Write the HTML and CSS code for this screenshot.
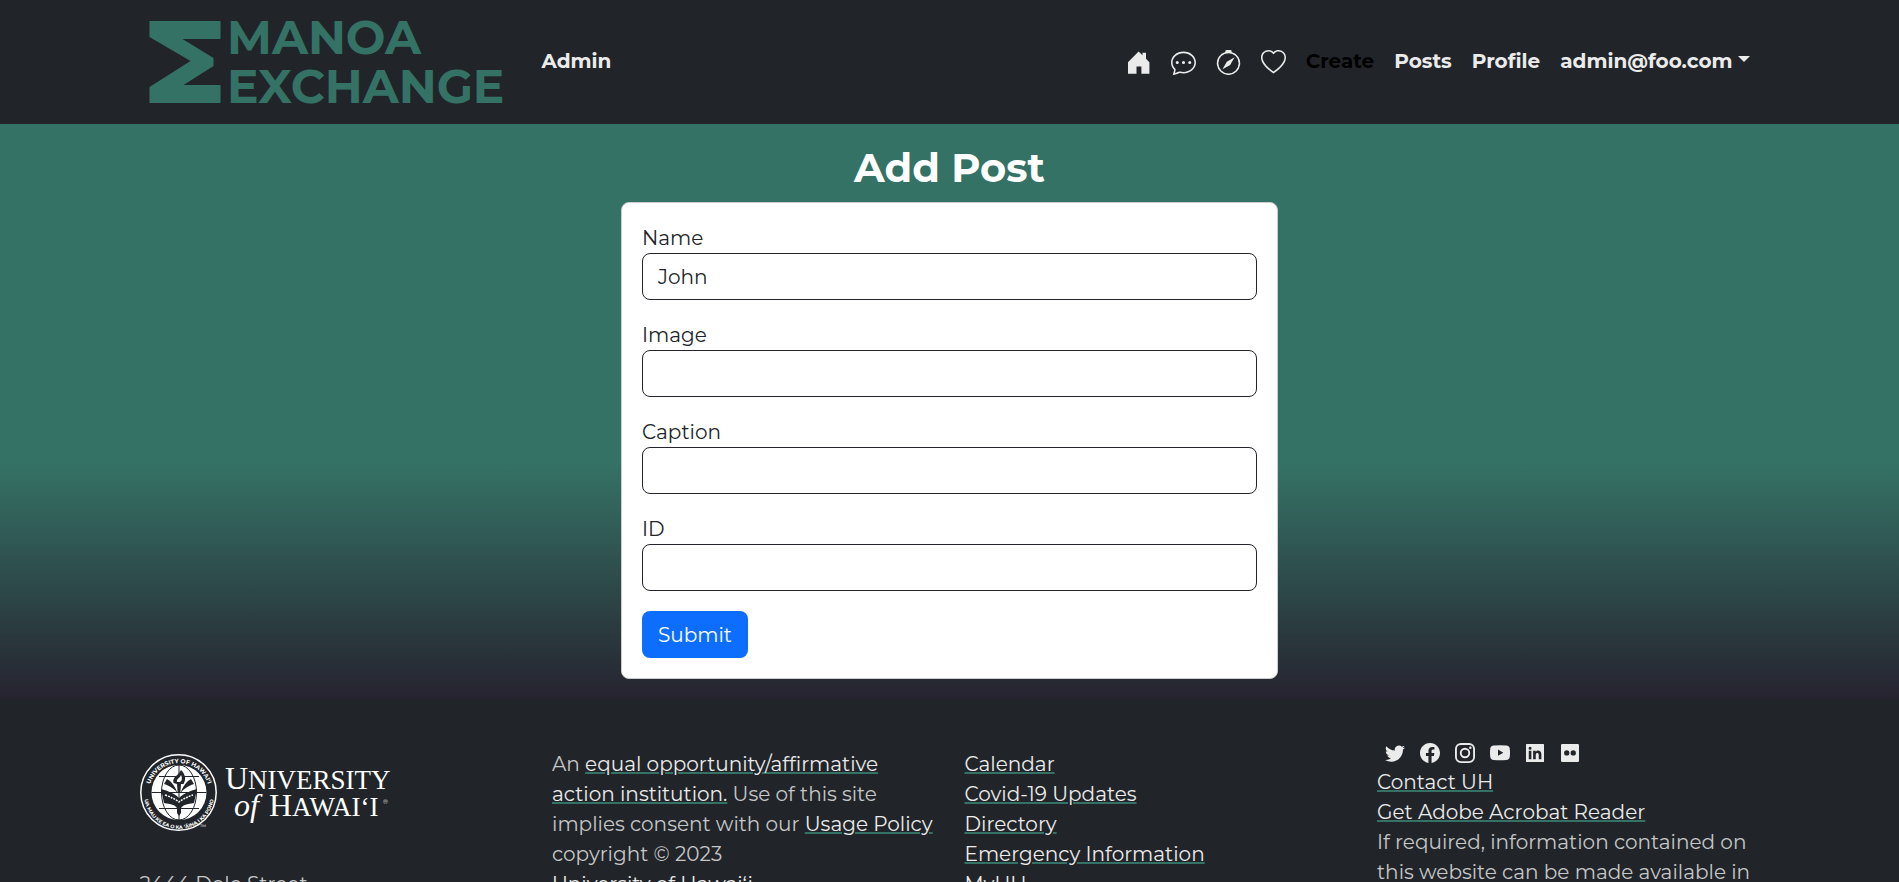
FILE: index.html
```
<!DOCTYPE html>
<html lang="en">
<head>
<meta charset="utf-8">
<title>Manoa Exchange</title>
<link rel="stylesheet" href="styles.css">
</head>
<body>
<header class="navbar">
  <nav class="container navbar-inner">
    <a class="brand" href="#" aria-label="Manoa Exchange">
      <svg class="brand-logo" width="372" height="84" viewBox="0 0 372 84" fill="currentColor">
        <path d="M9.500 1H80.500V19H42.500L73.500 38V46L43.500 65H80.500V83H9.500V67L50.500 41L9.500 17Z"/>
        <text class="brand-text" x="87" y="34">MANOA</text>
        <text class="brand-text" x="87" y="83">EXCHANGE</text>
      </svg>
    </a>
    <a class="nav-link" href="#">Admin</a>
    <div class="nav-end">
      <a class="nav-link icon-link" href="#" aria-label="Home"><svg class="nav-icon" viewBox="0 0 25 25"><path d="M2 12.200L12.600 1.500L16.500 5.300V2.800H20V8.800L23.400 12.200V23.700H15.400V16.400H10.500V23.700H2Z"/></svg></a>
      <a class="nav-link icon-link" href="#" aria-label="Messages"><svg class="nav-icon" viewBox="0 0 16 16"><path d="M5 8a1 1 0 1 1-2 0 1 1 0 0 1 2 0zm4 0a1 1 0 1 1-2 0 1 1 0 0 1 2 0zm3 1a1 1 0 1 0 0-2 1 1 0 0 0 0 2z"/><path d="m2.165 15.803.02-.004c1.830-.363 2.948-.842 3.468-1.105A9.060 9.060 0 0 0 8 15c4.418 0 8-3.134 8-7s-3.582-7-8-7-8 3.134-8 7c0 1.760.743 3.370 1.970 4.600a10.437 10.437 0 0 1-.524 2.318l-.003.011a10.722 10.722 0 0 1-.244.637c-.079.186.074.394.273.362a21.673 21.673 0 0 0 .693-.125zm.8-3.108a1 1 0 0 0-.287-.801C1.618 10.830 1 9.468 1 8c0-3.192 3.004-6 7-6s7 2.808 7 6c0 3.193-3.004 6-7 6a8.060 8.060 0 0 1-2.088-.272 1 1 0 0 0-.711.074c-.387.196-1.240.570-2.634.893a10.970 10.970 0 0 0 .398-2z"/></svg></a>
      <a class="nav-link icon-link" href="#" aria-label="Explore"><svg class="nav-icon" viewBox="0 0 16 16"><path d="M8 16.016a7.500 7.500 0 0 0 1.962-14.740A1 1 0 0 0 9 0H7a1 1 0 0 0-.962 1.276A7.500 7.500 0 0 0 8 16.016zm6.500-7.500a6.500 6.500 0 1 1-13 0 6.500 6.500 0 0 1 13 0z"/><path d="m6.940 7.440 4.950-2.830-2.830 4.950-4.949 2.830 2.828-4.950z"/></svg></a>
      <a class="nav-link icon-link" href="#" aria-label="Favorites"><svg class="nav-icon" viewBox="0 0 16 16"><path d="m8 2.748-.717-.737C5.600.281 2.514.878 1.400 3.053c-.523 1.023-.641 2.500.314 4.385.920 1.815 2.834 3.989 6.286 6.357 3.452-2.368 5.365-4.542 6.286-6.357.955-1.886.838-3.362.314-4.385C13.486.878 10.400.280 8.717 2.010L8 2.748zM8 15C-7.333 4.868 3.279-3.040 7.824 1.143c.060.055.119.112.176.171a3.120 3.120 0 0 1 .176-.170C12.720-3.042 23.333 4.867 8 15z"/></svg></a>
      <a class="nav-link active" href="#">Create</a>
      <a class="nav-link" href="#">Posts</a>
      <a class="nav-link" href="#">Profile</a>
      <button class="nav-link dropdown" type="button">admin@foo.com</button>
    </div>
  </nav>
</header>

<main class="page">
  <div class="form-column">
    <h2 class="title">Add Post</h2>
    <form class="card">
      <div class="field"><label for="name">Name</label><input id="name" type="text" value="John"></div>
      <div class="field"><label for="image">Image</label><input id="image" type="text"></div>
      <div class="field"><label for="caption">Caption</label><input id="caption" type="text"></div>
      <div class="field"><label for="post-id">ID</label><input id="post-id" type="text"></div>
      <button class="submit" type="button">Submit</button>
    </form>
  </div>
</main>

<footer class="footer">
  <div class="container footer-grid">
    <div class="footer-col">
      <svg class="uh-logo" width="260" height="80" viewBox="0 0 260 80" role="img" aria-label="University of Hawaiʻi">
        <defs>
          <path id="arc-top" d="M8.900 42.700A30.200 30.200 0 1 1 69.100 42.700"/>
          <path id="arc-bottom" d="M4 41A35 35 0 0 0 74 41"/>
        </defs>
        <circle cx="38.500" cy="39.500" r="37.700" fill="#212529" stroke="#fff" stroke-width="1.500"/>
        <circle cx="39" cy="39.500" r="27.500" fill="#fff"/>
        <g fill="none" stroke="#212529" stroke-width="1">
          <path d="M11.500 39.500H66.500M19 23.500H59M19 55.500H59M39 12V67"/>
          <ellipse cx="39" cy="39.500" rx="17.500" ry="27.500"/>
        </g>
        <path d="M21 36C28 38 34 40 39 45C44 40 50 38 57 36L54 50C47 51 43 52 41 55V60L39 63L37 60V55C35 52 31 51 24 50Z" fill="#212529"/>
        <path d="M24 31C30 33 35 36 38 41C35 33 31 28 27 26M54 31C48 33 43 36 40 41C43 33 47 28 51 26" fill="#212529"/>
        <path d="M25 42C31 44 35 46 39 49C43 46 47 44 53 42" fill="none" stroke="#fff" stroke-width="1.500" stroke-dasharray="2 1"/>
        <path d="M33.500 30C32 24 38 23 41 17C46 22 46 27 43.500 31H41L40.300 40H37.700L37 31Z" fill="#212529"/>
        <path d="M37 29C36 26 40 25 41 22C42.500 25 42 28 40 29Z" fill="#fff"/>
        <text class="seal-top"><textPath href="#arc-top" startOffset="50%">UNIVERSITY OF HAWAIʻI</textPath></text>
        <text class="seal-bottom"><textPath href="#arc-bottom" startOffset="50%">UA MAU KE EA O KA ʻĀINA I KA PONO</textPath></text>
        <g class="wordmark">
          <text x="85" y="36"><tspan class="cap">U</tspan>NIVERSITY</text>
          <text class="cap of" x="94" y="63">of</text>
          <text x="129" y="63"><tspan class="cap">H</tspan>AWAIʻI</text>
        </g>
        <text class="mark" x="243" y="51">®</text>
        <text class="mark" x="60" y="76">™</text>
      </svg>
      <div class="address">2444 Dole Street<br>Honolulu, HI 96822</div>
    </div>
    <div class="footer-col">
      An <a href="#">equal opportunity/affirmative action institution.</a> Use of this site implies consent with our <a href="#">Usage Policy</a><br>copyright © 2023<br><a href="#">University of Hawaiʻi</a>
    </div>
    <div class="footer-col">
      <a href="#">Calendar</a><br>
      <a href="#">Covid-19 Updates</a><br>
      <a href="#">Directory</a><br>
      <a href="#">Emergency Information</a><br>
      <a href="#">MyUH</a>
    </div>
    <div class="footer-col social-col">
      <div class="social">
        <a href="#" aria-label="Twitter"><svg viewBox="0 0 16 16"><path d="M5.026 15c6.038 0 9.341-5.003 9.341-9.334 0-.140 0-.282-.006-.422A6.685 6.685 0 0 0 16 3.542a6.658 6.658 0 0 1-1.889.518 3.301 3.301 0 0 0 1.447-1.817 6.533 6.533 0 0 1-2.087.793A3.286 3.286 0 0 0 7.875 6.030a9.325 9.325 0 0 1-6.767-3.429 3.289 3.289 0 0 0 1.018 4.382A3.323 3.323 0 0 1 .640 6.575v.045a3.288 3.288 0 0 0 2.632 3.218 3.203 3.203 0 0 1-.865.115 3.230 3.230 0 0 1-.614-.057 3.283 3.283 0 0 0 3.067 2.277A6.588 6.588 0 0 1 .780 13.580a6.320 6.320 0 0 1-.780-.045A9.344 9.344 0 0 0 5.026 15z"/></svg></a>
        <a href="#" aria-label="Facebook"><svg viewBox="0 0 16 16"><path d="M16 8.049c0-4.446-3.582-8.050-8-8.050C3.580 0-.002 3.603-.002 8.050c0 4.017 2.926 7.347 6.750 7.951v-5.625h-2.030V8.050H6.750V6.275c0-2.017 1.195-3.131 3.022-3.131.876 0 1.791.157 1.791.157v1.980h-1.009c-.993 0-1.303.621-1.303 1.258v1.510h2.218l-.354 2.326H9.250V16c3.824-.604 6.750-3.934 6.750-7.951z"/></svg></a>
        <a href="#" aria-label="Instagram"><svg viewBox="0 0 16 16"><rect x=".75" y=".75" width="14.500" height="14.500" rx="4" fill="none" stroke="currentColor" stroke-width="1.500"/><circle cx="8" cy="8" r="3.400" fill="none" stroke="currentColor" stroke-width="1.500"/><circle cx="12.270" cy="3.700" r="1"/></svg></a>
        <a href="#" aria-label="YouTube"><svg viewBox="0 0 16 16"><path fill-rule="evenodd" d="M3 2Q8 1.600 13 2Q15.600 2.200 15.800 4.500Q16.200 8 15.800 11Q15.600 13.400 13 13.600Q8 14 3 13.600Q.400 13.400.200 11Q-.200 8 .200 4.500Q.400 2.200 3 2ZM6.400 5.200V10.200L10.600 7.700Z"/></svg></a>
        <a href="#" aria-label="LinkedIn"><svg viewBox="0 0 16 16"><path fill-rule="evenodd" d="M1.300.800H14.700Q15.200.800 15.200 1.300V14.700Q15.200 15.200 14.700 15.200H1.300Q.800 15.200.800 14.700V1.300Q.800.800 1.300.800ZM3 6.200V13H5.100V6.200ZM6.500 6.200V13H8.600V9.600C8.600 7.500 11 7.500 11 9.600V13H13.100V9C13.100 5.700 9.800 5.300 8.600 7.100V6.200ZM4.050 2.900A1.200 1.200 0 1 0 4.050 5.300A1.200 1.200 0 1 0 4.050 2.900Z"/></svg></a>
        <a href="#" aria-label="Flickr"><svg viewBox="0 0 16 16"><path fill-rule="evenodd" d="M1.800.800H14.200Q15.200.800 15.200 1.800V14.200Q15.200 15.200 14.200 15.200H1.800Q.800 15.200.800 14.200V1.800Q.800.800 1.800.800ZM5.400 5.800A2.100 2.100 0 1 0 5.400 10A2.100 2.100 0 1 0 5.400 5.800ZM10.600 5.800A2.100 2.100 0 1 0 10.600 10A2.100 2.100 0 1 0 10.600 5.800Z"/></svg></a>
      </div>
      <a href="#">Contact UH</a><br>
      <a href="#">Get Adobe Acrobat Reader</a><br>
      If required, information contained on this website can be made available in an alternative format upon request.
    </div>
  </div>
</footer>
</body>
</html>
```
FILE: styles.css
```
* {
  box-sizing: border-box;
}

body {
  margin: 0;
  height: 100vh;
  overflow: hidden;
  background: #212529;
  font-family: Montserrat, "Open Sans", sans-serif;
  font-size: 20px;
  line-height: 30px;
  color: #212529;
}

.container {
  max-width: 1650px;
  margin: 0 auto;
  padding: 0 15px;
}

.navbar {
  padding: 20px 0;
  background: #212529;
}

.navbar-inner {
  display: flex;
  align-items: center;
}

.brand {
  display: flex;
  margin-right: 20px;
  color: #357266;
}

.brand-logo {
  overflow: visible;
}

.brand-text {
  font-size: 47px;
  font-weight: 700;
}

.nav-end {
  display: flex;
  align-items: center;
  margin-left: auto;
}

.nav-link {
  display: flex;
  align-items: center;
  padding: 10px 10px 12px;
  border: 0;
  background: none;
  font: inherit;
  font-weight: 700;
  color: #ebebeb;
  text-decoration: none;
}

.nav-link.icon-link {
  padding: 10px;
}

.nav-link.active {
  color: #000;
}

.nav-icon {
  width: 25px;
  height: 25px;
  fill: currentColor;
}

.dropdown::after {
  content: "";
  margin: 0 0 4px 5px;
  border: 6px solid transparent;
  border-top-color: currentColor;
  border-bottom: 0;
}

.page {
  padding: 20px;
  background: linear-gradient(#357266 59%, #26232f);
}

.form-column {
  max-width: 657px;
  margin: 0 auto;
}

.title {
  margin: 0 0 10px;
  font-size: 40px;
  font-weight: 700;
  line-height: 48px;
  text-align: center;
  color: #fff;
}

.card {
  padding: 20px;
  border: 1px solid #ccc;
  border-radius: 8px;
  background: #fff;
}

.field {
  margin-bottom: 20px;
}

.field label {
  display: block;
}

.field input {
  display: block;
  width: 100%;
  height: 47px;
  padding: 0 15px;
  border: 1px solid #26232f;
  border-radius: 8px;
  font: inherit;
  color: #212529;
}

.submit {
  display: block;
  height: 47px;
  padding: 0 16px;
  border: 0;
  border-radius: 8px;
  background: #0d6efd;
  font: inherit;
  color: #fff;
}

.footer {
  padding-top: 40px;
  background: #212529;
  color: #c6c7c8;
}

.footer-grid {
  display: grid;
  grid-template-columns: repeat(4, 1fr);
  column-gap: 30px;
}

.footer-col {
  padding-top: 10px;
}

.footer-col.social-col {
  padding-top: 0;
}

.footer a {
  color: #ebebeb;
  text-decoration-color: #357266;
  text-decoration-thickness: 2px;
}

.social {
  display: flex;
  gap: 15px;
  padding: 4px 8px;
}

.social svg {
  display: block;
  width: 20px;
  height: 20px;
  fill: currentColor;
}

.uh-logo {
  display: block;
  margin: 4px 0 2px;
  fill: #fff;
}

.address {
  padding-top: 34px;
}

.wordmark {
  font-family: "Liberation Serif", serif;
  font-size: 27px;
}

.wordmark .cap {
  font-size: 32px;
}

.wordmark .of {
  font-style: italic;
}

.seal-top,
.seal-bottom {
  font-size: 6px;
  font-weight: 700;
  text-anchor: middle;
}

.seal-bottom {
  font-size: 5px;
}

.mark {
  font-size: 6px;
}
```
